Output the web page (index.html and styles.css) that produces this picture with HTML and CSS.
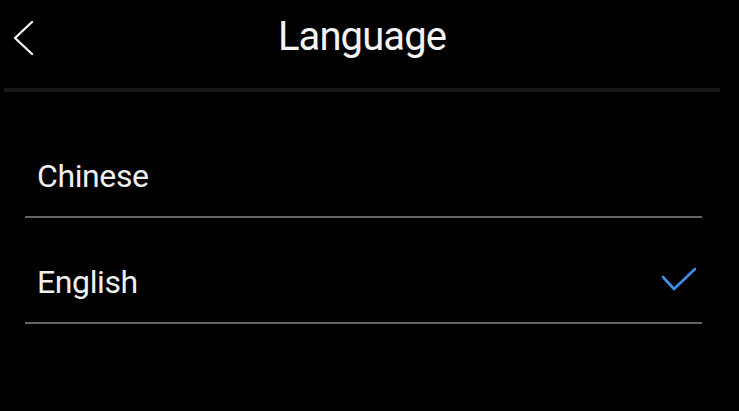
FILE: index.html
```html
<!DOCTYPE html>
<html lang="en">
<head>
<meta charset="utf-8">
<title>Language</title>
<link rel="stylesheet" href="styles.css">
</head>
<body>
<div class="screen">
  <header class="topbar">
    <button class="back" aria-label="Back">
      <svg width="20" height="36" viewBox="0 0 20 36"><polyline points="18,2 1,18 18,34" fill="none" stroke="#f2f2f2" stroke-width="2.4" stroke-linecap="round" stroke-linejoin="round"/></svg>
    </button>
    <h1 class="title">Language</h1>
    <span class="spacer"></span>
  </header>
  <ul class="options">
    <li class="option"><span class="label">Chinese</span></li>
    <li class="option selected"><span class="label">English</span>
      <svg class="check" width="38" height="25" viewBox="0 0 38 25"><polyline points="3,10 14,22 35,2" fill="none" stroke="#3d8fea" stroke-width="2.6" stroke-linecap="round" stroke-linejoin="round"/></svg>
    </li>
  </ul>
</div>
</body>
</html>
```
FILE: styles.css
```css
html, body {
  margin: 0;
  padding: 0;
  background: #000;
}
body {
  width: 739px;
  height: 411px;
  overflow: hidden;
  font-family: Roboto, "Noto Sans", "Liberation Sans", sans-serif;
  color: #f2f2f2;
}
.screen {
  margin-left: 4px;
  width: 716px;
}
.topbar {
  display: grid;
  grid-template-columns: 1fr auto 1fr;
  align-items: start;
  height: 88px;
  border-bottom: 4px solid #181818;
}
.back {
  justify-self: start;
  margin: 20px 0 0 10px;
  padding: 0;
  border: 0;
  background: none;
  width: 20px;
  height: 36px;
  display: block;
}
.back svg { display: block; }
.title {
  margin: 13px 0 0;
  font-size: 40px;
  line-height: 48px;
  font-weight: 400;
  letter-spacing: -0.9px;
  color: #f4f4f4;
}
.options {
  list-style: none;
  margin: 20px 18px 0 21px;
  padding: 0;
}
.option {
  display: flex;
  align-items: center;
  justify-content: space-between;
  height: 38px;
  padding: 45px 4px 21px 12px;
  border-bottom: 2px solid #646464;
}
.label {
  font-size: 32px;
  line-height: 38px;
  letter-spacing: -0.4px;
  color: #efefef;
}
.check {
  display: block;
  margin-bottom: 5px;
}
```
